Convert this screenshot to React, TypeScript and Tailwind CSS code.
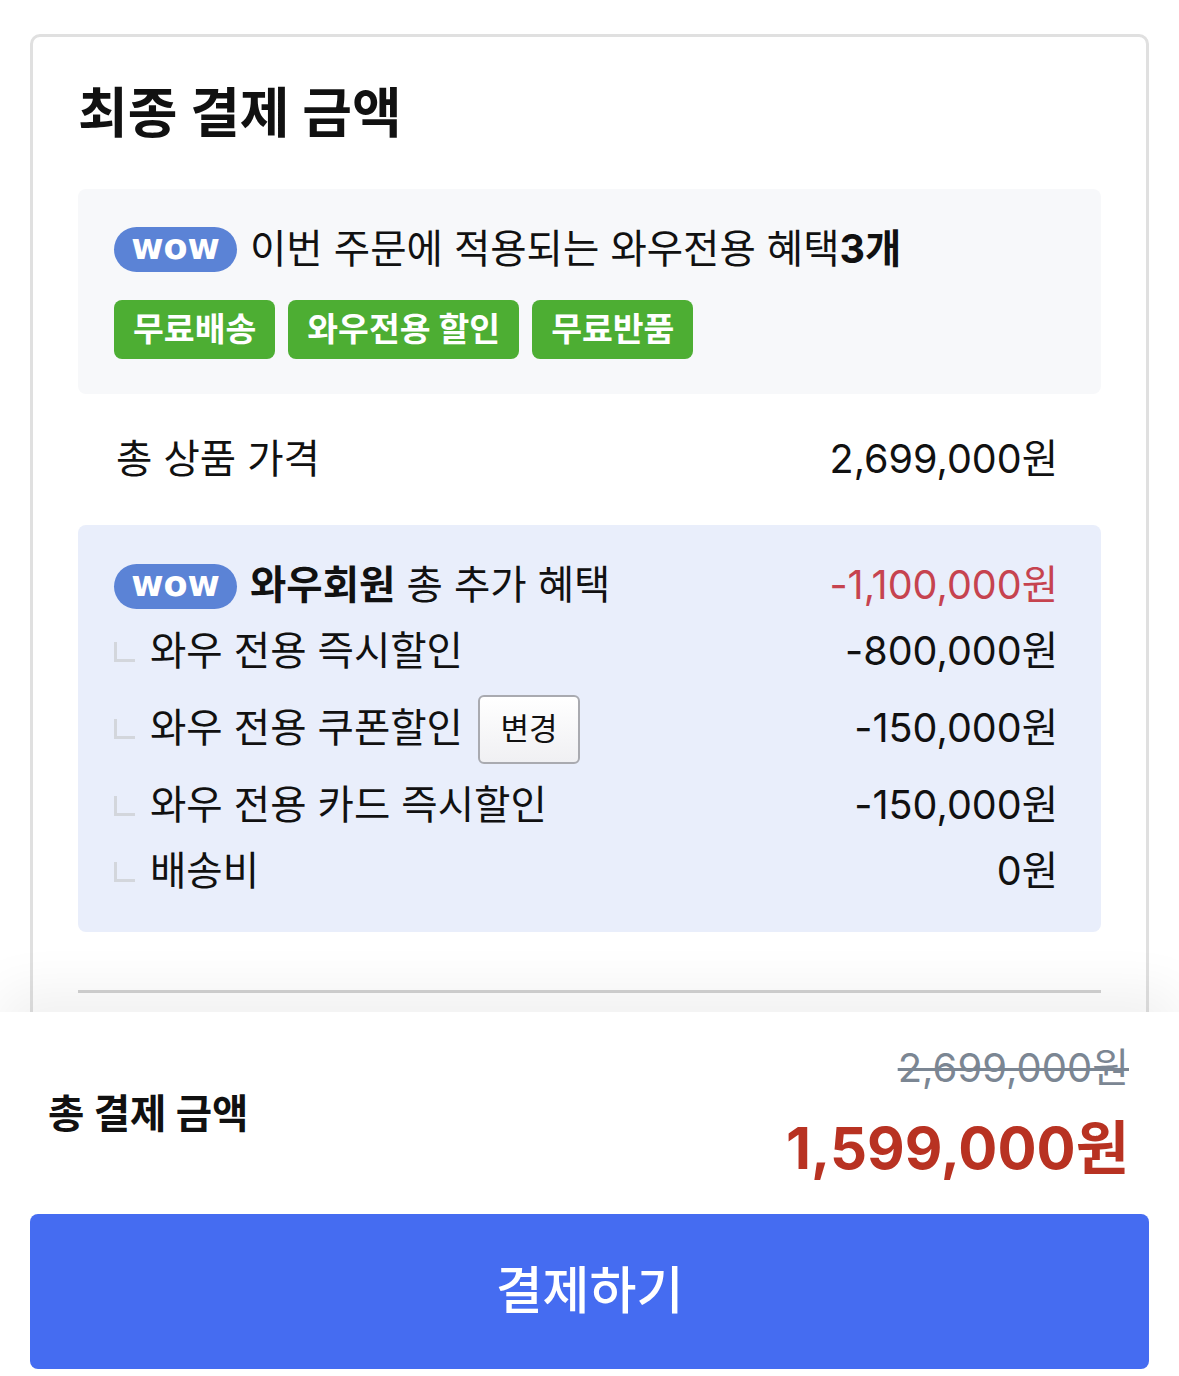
import React from "react";

const font = "font-['Inter','Noto_Sans_CJK_KR',sans-serif]";

function WowBadge() {
	return (
		<span className="inline-flex h-[45px] w-[123px] shrink-0 items-center justify-center rounded-full bg-[#5b83d6] pb-[4px] font-['DejaVu_Sans',sans-serif] text-[35px] font-bold leading-none text-white">
			wow
		</span>
	);
}

function Corner() {
	return <span className="mr-[15px] inline-block h-[20px] w-[21px] shrink-0 border-b-[3px] border-l-[3px] border-[#d3d6dc]" />;
}

const subRows = [
	{ label: "와우 전용 즉시할인", value: "-800,000원" },
	{ label: "와우 전용 쿠폰할인", value: "-150,000원", button: true },
	{ label: "와우 전용 카드 즉시할인", value: "-150,000원" },
	{ label: "배송비", value: "0원" }
];

export default function App() {
	return (
		<div className={`relative h-[1376px] overflow-hidden bg-white text-[#111] ${font}`}>
			<div className="px-[30px] pt-[34px]">
				<div className="rounded-[10px] border-[3px] border-[#e0e0e0] px-[45px] pb-[300px] pt-[46px]">
					<h1 className="text-[54px] font-bold leading-[62px]">최종 결제 금액</h1>

					{/* wow benefits */}
					<div className="mt-[44px] rounded-[8px] bg-[#f7f8fa] pb-[35px] pl-[36px] pr-[43px] pt-[38px]">
						<div className="flex h-[45px] items-center gap-[13px] text-[39.5px] leading-none">
							<WowBadge />
							<span>
								이번 주문에 적용되는 와우전용 혜택<b className="font-bold">3개</b>
							</span>
						</div>
						<div className="mt-[28px] flex gap-[13px]">
							{["무료배송", "와우전용 할인", "무료반품"].map(t => (
								<span
									key={t}
									className="flex h-[59px] items-center rounded-[8px] bg-[#4dae33] px-[19px] text-[33.5px] font-bold text-white"
								>
									{t}
								</span>
							))}
						</div>
					</div>

					<div className="flex h-[131px] items-center justify-between pl-[38px] pr-[43px] text-[39.5px]">
						<span>총 상품 가격</span>
						<span>2,699,000원</span>
					</div>

					{/* wow member discounts */}
					<div className="rounded-[8px] bg-[#e9eefb] pb-[27px] pl-[36px] pr-[43px] pt-[28px] text-[39.5px]">
						<div className="flex h-[66px] items-center justify-between">
							<div className="flex items-center gap-[13px]">
								<WowBadge />
								<span>
									<b className="font-bold">와우회원</b> 총 추가 혜택
								</span>
							</div>
							<span className="text-[#c6434f]">-1,100,000원</span>
						</div>
						{subRows.map(r => (
							<div key={r.label} className={`flex items-center justify-between ${r.button ? "h-[88px]" : "h-[66px]"}`}>
								<div className="flex items-center">
									<Corner />
									<span>{r.label}</span>
									{r.button && (
										<button className="ml-[15px] h-[69px] w-[102px] rounded-[6px] border-2 border-[#a9aab0] bg-gradient-to-b from-white to-[#f0f0f3] text-[31px] text-[#111]">
											변경
										</button>
									)}
								</div>
								<span>{r.value}</span>
							</div>
						))}
					</div>

					<div className="mt-[58px] h-[3px] bg-[#d2d2d2]" />
				</div>
			</div>

			{/* bottom sheet */}
			<div className="absolute inset-x-0 bottom-0 h-[364px] bg-white px-[30px] pt-[32px] shadow-[0_-22px_50px_rgba(0,0,0,0.06)]">
				<div className="flex items-center justify-between pl-[18px] pr-[20px]">
					<span className="text-[39.5px] font-bold">총 결제 금액</span>
					<div className="flex flex-col items-end">
						<span className="text-[40px] leading-[48px] text-[#7b8693] line-through decoration-[#7b8693] decoration-[3px]">
							2,699,000원
						</span>
						<span className="mt-[18px] text-[58px] font-bold leading-[76px] text-[#b83222]">1,599,000원</span>
					</div>
				</div>
				<button className="mt-[28px] flex h-[155px] w-full items-center justify-center rounded-[8px] bg-[#456cf1] text-[51px] font-medium text-white">
					결제하기
				</button>
			</div>
		</div>
	);
}
